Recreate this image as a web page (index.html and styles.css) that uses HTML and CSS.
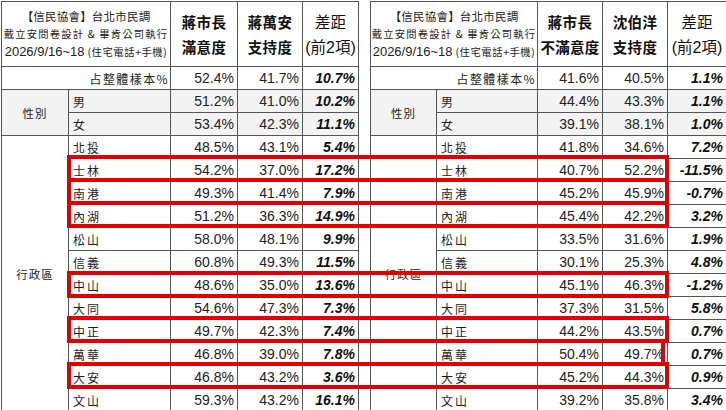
FILE: index.html
```html
<!DOCTYPE html>
<html lang="zh-Hant">
<head>
<meta charset="utf-8">
<link rel="stylesheet" href="styles.css">
</head>
<body>
<div class="page">
  <div class="tables">
    <table class="poll left">
      <colgroup><col class="c1"><col class="c2"><col class="c3"><col class="c4"><col class="c5"></colgroup>
      <tr class="head">
        <th colspan="2" class="title"><div>【信民協會】台北市民調</div><div class="sub">戴立安問卷設計 &amp; 畢肯公司執行</div><div class="sub date"><span class="num">2026/9/16~18</span> (住宅電話+手機)</div></th>
        <th class="hd bold">蔣市長<br>滿意度</th>
        <th class="hd bold">蔣萬安<br>支持度</th>
        <th class="hd">差距<br><span class="num">(</span>前<span class="num">2</span>項<span class="num">)</span></th>
      </tr>
      <tr><td colspan="2" class="total">占整體樣本%</td><td class="n">52.4%</td><td class="n">41.7%</td><td class="n d">10.7%</td></tr>
      <tr class="gray"><td rowspan="2" class="grp">性別</td><td class="nm">男</td><td class="n">51.2%</td><td class="n">41.0%</td><td class="n d">10.2%</td></tr>
      <tr class="gray"><td class="nm">女</td><td class="n">53.4%</td><td class="n">42.3%</td><td class="n d">11.1%</td></tr>
      <tr><td rowspan="12" class="grp">行政區</td><td class="nm">北投</td><td class="n">48.5%</td><td class="n">43.1%</td><td class="n d">5.4%</td></tr>
      <tr><td class="nm">士林</td><td class="n">54.2%</td><td class="n">37.0%</td><td class="n d">17.2%</td></tr>
      <tr><td class="nm">南港</td><td class="n">49.3%</td><td class="n">41.4%</td><td class="n d">7.9%</td></tr>
      <tr><td class="nm">內湖</td><td class="n">51.2%</td><td class="n">36.3%</td><td class="n d">14.9%</td></tr>
      <tr><td class="nm">松山</td><td class="n">58.0%</td><td class="n">48.1%</td><td class="n d">9.9%</td></tr>
      <tr><td class="nm">信義</td><td class="n">60.8%</td><td class="n">49.3%</td><td class="n d">11.5%</td></tr>
      <tr><td class="nm">中山</td><td class="n">48.6%</td><td class="n">35.0%</td><td class="n d">13.6%</td></tr>
      <tr><td class="nm">大同</td><td class="n">54.6%</td><td class="n">47.3%</td><td class="n d">7.3%</td></tr>
      <tr><td class="nm">中正</td><td class="n">49.7%</td><td class="n">42.3%</td><td class="n d">7.4%</td></tr>
      <tr><td class="nm">萬華</td><td class="n">46.8%</td><td class="n">39.0%</td><td class="n d">7.8%</td></tr>
      <tr><td class="nm">大安</td><td class="n">46.8%</td><td class="n">43.2%</td><td class="n d">3.6%</td></tr>
      <tr><td class="nm">文山</td><td class="n">59.3%</td><td class="n">43.2%</td><td class="n d">16.1%</td></tr>
    </table>
    <table class="poll right">
      <colgroup><col class="r1"><col class="r2"><col class="r3"><col class="r4"><col class="r5"></colgroup>
      <tr class="head">
        <th colspan="2" class="title"><div>【信民協會】台北市民調</div><div class="sub">戴立安問卷設計 &amp; 畢肯公司執行</div><div class="sub date"><span class="num">2026/9/16~18</span> (住宅電話+手機)</div></th>
        <th class="hd bold">蔣市長<br>不滿意度</th>
        <th class="hd bold">沈伯洋<br>支持度</th>
        <th class="hd">差距<br><span class="num">(</span>前<span class="num">2</span>項<span class="num">)</span></th>
      </tr>
      <tr><td colspan="2" class="total">占整體樣本%</td><td class="n">41.6%</td><td class="n">40.5%</td><td class="n d">1.1%</td></tr>
      <tr class="gray"><td rowspan="2" class="grp">性別</td><td class="nm">男</td><td class="n">44.4%</td><td class="n">43.3%</td><td class="n d">1.1%</td></tr>
      <tr class="gray"><td class="nm">女</td><td class="n">39.1%</td><td class="n">38.1%</td><td class="n d">1.0%</td></tr>
      <tr><td rowspan="12" class="grp">行政區</td><td class="nm">北投</td><td class="n">41.8%</td><td class="n">34.6%</td><td class="n d">7.2%</td></tr>
      <tr><td class="nm">士林</td><td class="n">40.7%</td><td class="n">52.2%</td><td class="n d">-11.5%</td></tr>
      <tr><td class="nm">南港</td><td class="n">45.2%</td><td class="n">45.9%</td><td class="n d">-0.7%</td></tr>
      <tr><td class="nm">內湖</td><td class="n">45.4%</td><td class="n">42.2%</td><td class="n d">3.2%</td></tr>
      <tr><td class="nm">松山</td><td class="n">33.5%</td><td class="n">31.6%</td><td class="n d">1.9%</td></tr>
      <tr><td class="nm">信義</td><td class="n">30.1%</td><td class="n">25.3%</td><td class="n d">4.8%</td></tr>
      <tr><td class="nm">中山</td><td class="n">45.1%</td><td class="n">46.3%</td><td class="n d">-1.2%</td></tr>
      <tr><td class="nm">大同</td><td class="n">37.3%</td><td class="n">31.5%</td><td class="n d">5.8%</td></tr>
      <tr><td class="nm">中正</td><td class="n">44.2%</td><td class="n">43.5%</td><td class="n d">0.7%</td></tr>
      <tr><td class="nm">萬華</td><td class="n">50.4%</td><td class="n">49.7%</td><td class="n d">0.7%</td></tr>
      <tr><td class="nm">大安</td><td class="n">45.2%</td><td class="n">44.3%</td><td class="n d">0.9%</td></tr>
      <tr><td class="nm">文山</td><td class="n">39.2%</td><td class="n">35.8%</td><td class="n d">3.4%</td></tr>
    </table>
  </div>
  <div class="mark m-shilin"></div>
  <div class="mark m-nangang"></div>
  <div class="mark m-neihu"></div>
  <div class="mark m-zhongshan"></div>
  <div class="mark m-zhongzheng"></div>
  <div class="mark m-wanhua"></div>
  <div class="mark m-daan"></div>
</div>
</body>
</html>
```
FILE: styles.css
```css
html, body {
  margin: 0;
  padding: 0;
  background: #ffffff;
}
body {
  width: 726px;
  height: 410px;
  overflow: hidden;
  font-family: "Noto Sans CJK TC", "Noto Sans", sans-serif;
  color: #1e1e1e;
}
.page {
  position: relative;
  padding: 1px 0 0 1px;
}
.tables {
  display: flex;
  gap: 11px;
  align-items: flex-start;
}
.poll {
  border-collapse: collapse;
  table-layout: fixed;
  border: 1px solid #444;
}
.poll.left { width: 357px; }
.poll.right { width: 356px; }
.c1 { width: 67px; }
.c2 { width: 102px; }
.c3 { width: 67px; }
.c4 { width: 65px; }
.c5 { width: 56px; }
.r1 { width: 66px; }
.r2 { width: 101px; }
.r3 { width: 65px; }
.r4 { width: 65px; }
.r5 { width: 59px; }
.poll th, .poll td {
  border: 1px solid #555;
  padding: 0;
  overflow: hidden;
  white-space: nowrap;
}
.poll tr { height: 23px; }
.poll tr.head { height: 65px; }
.title {
  font-weight: 400;
  font-size: 11.5px;
  line-height: 18px;
  text-align: center;
  letter-spacing: 0.2px;
  color: #222;
}
.title .sub {
  font-size: 10.3px;
  letter-spacing: 1.2px;
}
.title .date {
  letter-spacing: 0.6px;
}
.title .date .num {
  font-size: 13px;
}
.num {
  font-family: "Liberation Sans Narrow", "Liberation Sans", sans-serif;
  font-size: 14px;
  letter-spacing: 0;
}
.hd {
  font-size: 15.5px;
  line-height: 25px;
  font-weight: 400;
  text-align: center;
  color: #111;
}
.hd.bold { font-weight: 700; font-size: 14.5px; letter-spacing: 0.3px; }
.hd .num { font-size: 16px; }
.total {
  text-align: right;
  font-size: 12px;
  letter-spacing: 1.4px;
  padding-right: 1px !important;
}
.gray td { background: #f3f3f3; }
.grp {
  text-align: center;
  font-size: 11.5px;
  letter-spacing: 1px;
  background: #fff;
}
.nm {
  font-size: 12px;
  letter-spacing: 2px;
  padding-left: 4px !important;
  text-align: left;
}
.n {
  font-family: "Liberation Sans Narrow", "Liberation Sans", sans-serif;
  font-size: 14px;
  text-align: right;
  padding-right: 3px !important;
  color: #222;
}
.n.d {
  font-weight: 700;
  font-style: italic;
  color: #111;
}
.mark {
  position: absolute;
  left: 67px;
  width: 594px;
  height: 19px;
  border: 4px solid #e00000;
}
.m-shilin { top: 155px; }
.m-nangang { top: 178px; }
.m-neihu { top: 201px; }
.m-zhongshan { top: 271px; }
.m-zhongzheng { top: 316px; }
.m-wanhua { top: 339px; border-left: none; left: 71px; width: 590px; }
.m-daan { top: 362px; }
```
